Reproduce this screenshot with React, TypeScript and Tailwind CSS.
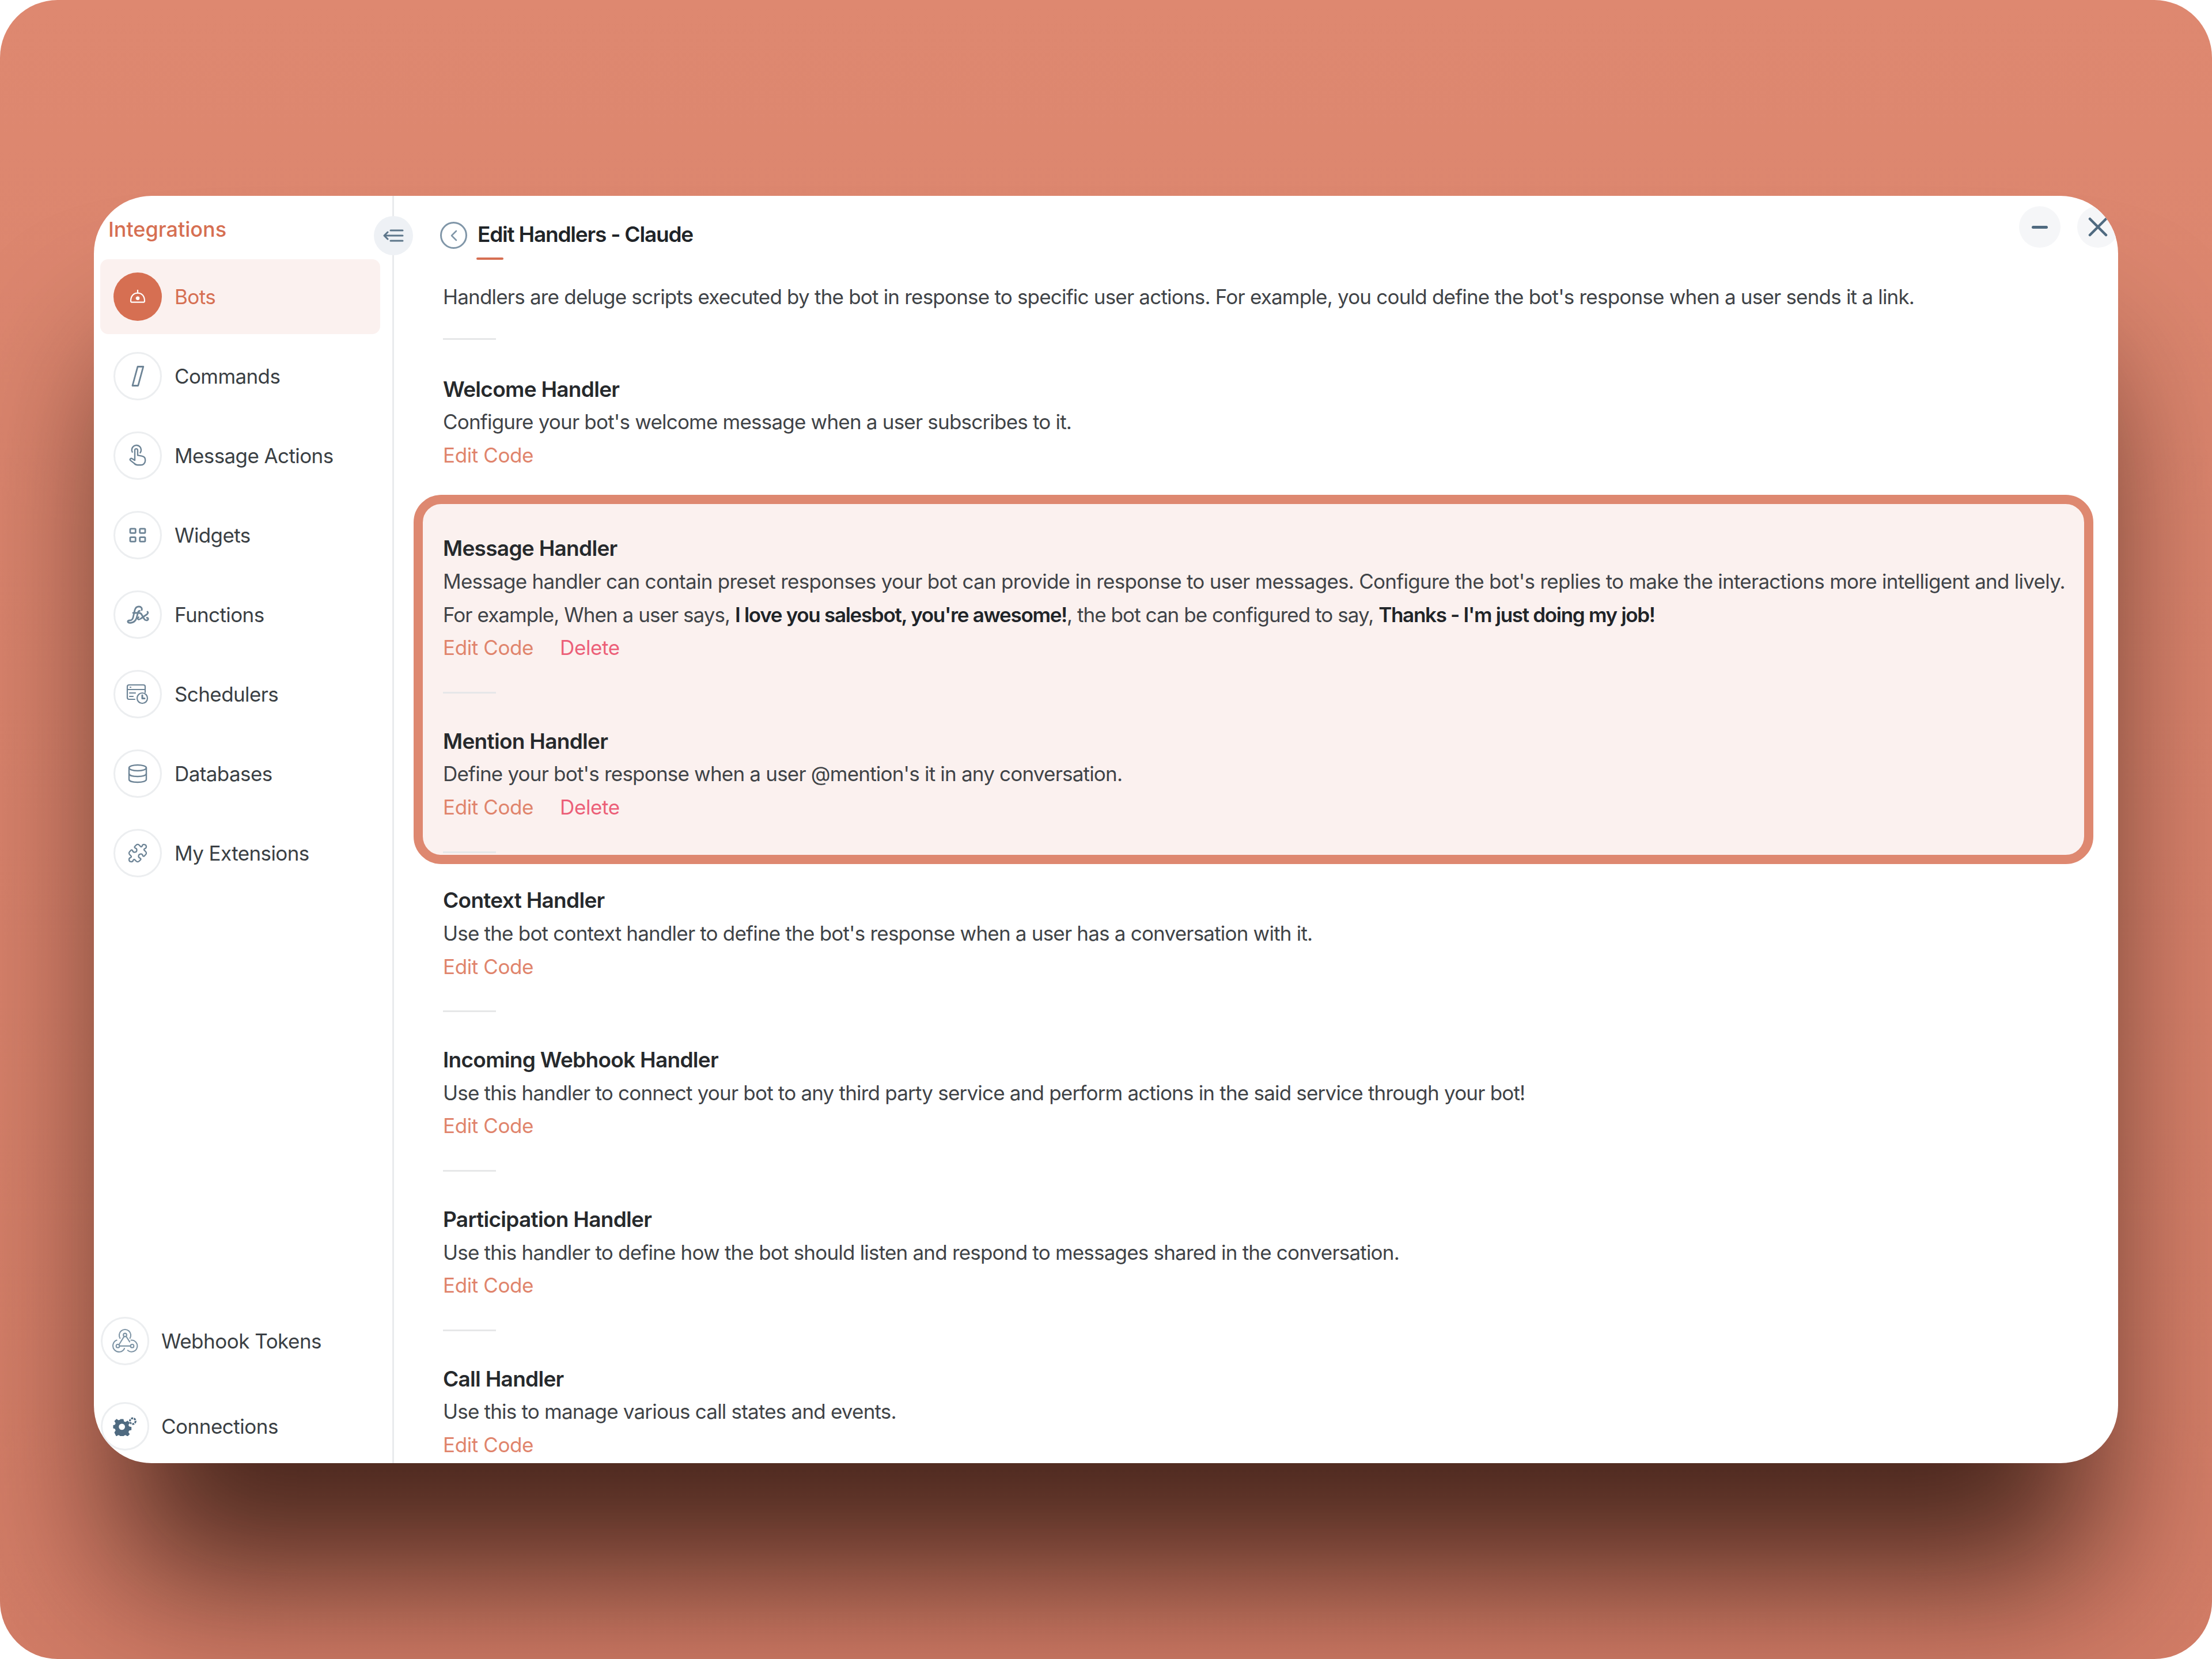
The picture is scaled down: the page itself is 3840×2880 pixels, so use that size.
import React from "react";
import { Puzzle } from "lucide-react";

const P = "#6d8496";
const S = { fill: "none", stroke: P, strokeWidth: 1.9, strokeLinecap: "round", strokeLinejoin: "round" } as const;

const icons: Record<string, React.ReactNode> = {
  bot: (
    <svg width="30" height="24" viewBox="0 0 32 26" fill="none" stroke="#fff" strokeWidth="2.400" strokeLinecap="round" strokeLinejoin="round">
      <path d="M16 1v5" />
      <path d="M3 21c0-9 5-15 13-15s13 6 13 15c0 1.600-1 2.500-3 2.500H6c-2 0-3-.9-3-2.500z" />
      <circle cx="16" cy="16" r="2.400" fill="#fff" />
    </svg>
  ),
  slash: (
    <svg width="36" height="40" viewBox="0 0 24 26" {...S}>
      <path d="M12 2h6.500L12.500 24H6z" />
    </svg>
  ),
  hand: (
    <svg width="30" height="42" viewBox="0 0 24 29" {...S}>
      <path d="M4.500 9.500a6.500 6.500 0 1 1 11 1" />
      <path d="M8 12V7a2 2 0 0 1 4 0v7l5.500 1c3 .5 5 2.500 5 5v1.500a6 6 0 0 1-6 6H12c-2 0-3.500-.8-4.800-2.300L1.800 21c-1.200-1.500.8-3.500 2.500-2.300L8 21z" />
    </svg>
  ),
  widgets: (
    <svg width="32" height="26" viewBox="0 0 32 28" fill="none" stroke={P} strokeWidth="3">
      <rect x="2" y="2" width="10" height="8" rx="1.500" />
      <rect x="20" y="2" width="10" height="8" rx="1.500" />
      <rect x="2" y="18" width="10" height="8" rx="1.500" />
      <rect x="20" y="18" width="10" height="8" rx="1.500" />
    </svg>
  ),
  fx: (
    <svg width="40" height="32" viewBox="0 0 40 32" fill="none" stroke={P} strokeWidth="2.800" strokeLinecap="round" strokeLinejoin="round">
      <path d="M27 8c1-3-1-6-5-6-3.500 0-6 2.500-7 6l-3 13c-.8 3.500-3 5-6 5-2 0-3.500 1-3 2.500.5 1.500 3 2 6 1.500 4.500-.8 7.500-3.500 9-8l2.500-9.500c.5-2 1.500-3 3-3" />
      <path d="M12 13h10c2.500 0 4 1 5 3l4 7c1.500 2.500 4 3.500 6 2.500s1.500-4-1-4" />
      <path d="M37 11c1.500 1.500.5 3.500-1 4.500l-10 7c-2 1.500-3.500 2.500-5 1.500-1.500-1-1-3 .5-3.500" />
    </svg>
  ),
  sched: (
    <svg width="40" height="36" viewBox="0 0 40 36" fill="none" stroke={P} strokeWidth="2.200" strokeLinecap="round" strokeLinejoin="round">
      <path d="M33 15V5c0-2-1.500-3-3-3H5C3 2 2 3.500 2 5v19c0 1.500 1 3 3 3h10" />
      <path d="M2 10h31" />
      <path d="M7 6h1M6 16h10M6 22h6" />
      <circle cx="28" cy="25" r="9" />
      <path d="M28 20v5.500h4" strokeWidth="3" />
    </svg>
  ),
  db: (
    <svg width="36" height="34" viewBox="0 0 36 34" fill="none" stroke={P} strokeWidth="2.400" strokeLinecap="round">
      <ellipse cx="18" cy="7" rx="15" ry="5" />
      <path d="M3 7v20c0 3 6 5 15 5s15-2 15-5V7" />
      <path d="M3 17c0 3 6 5 15 5s15-2 15-5" />
    </svg>
  ),
  ext: <Puzzle size={36} color={P} strokeWidth={1.500} />,
  hook: (
    <svg width="46" height="44" viewBox="0 0 48 44" fill="none" stroke="#7f95a6" strokeWidth="2.200" strokeLinecap="round" strokeLinejoin="round">
      <circle cx="24" cy="11" r="3" />
      <circle cx="11" cy="31" r="3" />
      <circle cx="37" cy="31" r="3" />
      <path d="M22.500 13.500L13.500 28M14 31h20M26 13.500l6.500 10" />
      <path d="M15 17a10.500 10.500 0 1 1 18 0" />
      <path d="M9 20.500a11 11 0 1 0 14 15" />
      <path d="M29 39a10.500 10.500 0 1 0 6-18.500" />
    </svg>
  ),
  gear: (
    <svg width="44" height="34" viewBox="0 0 46 38">
      <path fill="#4f6a80" fillRule="evenodd" d="M14 5h6l1 4.500 3 1.200 4-2.500 4.200 4.200-2.500 4 1.300 3 4.500 1v6l-4.500 1-1.300 3 2.500 4-4.200 4.200-4-2.500-3 1.200-1 2.700h-6l-1-2.700-3-1.200-4 2.500L2.300 31l2.500-4-1.300-3L0 23v-6l3.500-1 1.300-3-2.500-4 4.200-4.200 4 2.500 3-1.200zM17 14a6 6 0 1 0 0 12 6 6 0 0 0 0-12z" />
      <circle cx="38" cy="9" r="5.500" fill="none" stroke="#4f6a80" strokeWidth="3.500" strokeDasharray="4 1.500" />
    </svg>
  ),
};

function NavItem({ icon, label, active }: { icon: string; label: string; active?: boolean }) {
  return (
    <div className={`flex h-[130px] items-center gap-[22px] rounded-[14px] pl-[23px] ${active ? "bg-[#fbf1ef]" : ""}`}>
      <div className={`flex h-[84px] w-[84px] items-center justify-center rounded-full ${active ? "bg-[#d66f52]" : "border-[3px] border-[#eceef0] bg-white"}`}>
        {icons[icon]}
      </div>
      <span className={`text-[35px] leading-none tracking-[-0.6px] ${active ? "text-[#d66f52]" : "text-[#3a3f44]"}`}>{label}</span>
    </div>
  );
}

function FootItem({ icon, label, mb }: { icon: string; label: string; mb: string }) {
  return (
    <div className={`flex items-center gap-[21px] pl-[12px] ${mb}`}>
      <div className="flex h-[84px] w-[84px] items-center justify-center rounded-full border-[3px] border-[#eceef0] bg-white">{icons[icon]}</div>
      <span className="text-[35px] leading-none tracking-[-0.5px] text-[#3a3f44]">{label}</span>
    </div>
  );
}

function Divider() {
  return <div className="h-[3px] w-[92px] bg-[#e6e7e8]" />;
}

function Handler({ title, children, del }: { title: string; children: React.ReactNode; del?: boolean }) {
  return (
    <div className="text-[35px] leading-[57.600px]">
      <div className="text-[37px] font-semibold tracking-[-0.7px] text-[#26292c]">{title}</div>
      <div className="tracking-[-0.8px] text-[#3f4347]">{children}</div>
      <div className="flex gap-[46px] tracking-[-0.4px]">
        <span className="text-[#e0846c]">Edit Code</span>
        {del && <span className="text-[#ec5f78]">Delete</span>}
      </div>
    </div>
  );
}

export default function App() {
  return (
    <div className="h-[2880px] w-[3840px] bg-white font-['Inter',sans-serif]">
      <div className="flex h-[2880px] w-[3840px] flex-col items-start overflow-hidden rounded-[100px] bg-[linear-gradient(180deg,#de8870_0%,#d27c66_100%)] pl-[163px] pt-[340px]">
        <div className="relative flex h-[2200px] w-[3514px] overflow-hidden rounded-[100px] bg-white shadow-[0_240px_320px_-50px_rgba(20,5,0,0.72)]">
          <aside className="flex w-[521px] shrink-0 flex-col border-r-[3px] border-[#e9ebed]">
            <div className="flex h-[110px] items-center pl-[25px] pt-[6px]">
              <span className="text-[36px] font-medium leading-none text-[#d66f52]">Integrations</span>
            </div>
            <nav className="ml-[11px] flex w-[486px] flex-col gap-[8px]">
              <NavItem icon="bot" label="Bots" active />
              <NavItem icon="slash" label="Commands" />
              <NavItem icon="hand" label="Message Actions" />
              <NavItem icon="widgets" label="Widgets" />
              <NavItem icon="fx" label="Functions" />
              <NavItem icon="sched" label="Schedulers" />
              <NavItem icon="db" label="Databases" />
              <NavItem icon="ext" label="My Extensions" />
            </nav>
            <div className="mt-auto flex flex-col">
              <FootItem icon="hook" label="Webhook Tokens" mb="mb-[64px]" />
              <FootItem icon="gear" label="Connections" mb="mb-[22px]" />
            </div>
          </aside>
          <div className="absolute left-[486px] top-[35px] flex h-[68px] w-[68px] items-center justify-center rounded-full bg-[#eef1f5]">
            <svg width="36" height="26" viewBox="0 0 36 26" fill="none" stroke="#5d768a" strokeWidth="3" strokeLinecap="round" strokeLinejoin="round">
              <path d="M13 4h21M2 13h32M13 22h21M8 7l-6 6 6 6" />
            </svg>
          </div>
          <main className="relative min-w-0 flex-1 overflow-hidden pl-[85px]">
            <div className="absolute right-[100px] top-[18px] flex h-[72px] w-[72px] items-center justify-center rounded-full bg-[#f5f6f8]">
              <div className="h-[5px] w-[28px] rounded-full bg-[#4f6a80]" />
            </div>
            <div className="absolute right-[-1px] top-[18px] flex h-[72px] w-[72px] items-center justify-center rounded-full bg-[#f5f6f8]">
              <svg width="34" height="34" viewBox="0 0 34 34" stroke="#4f6a80" strokeWidth="4.500" strokeLinecap="round"><path d="M3 3l28 28M31 3L3 31" /></svg>
            </div>
            <header className="ml-[-5px] flex h-[110px] items-center gap-[18px] pt-[27px]">
              <div className="flex h-[47px] w-[47px] items-center justify-center rounded-full border-[3px] border-[#8096a8]">
                <svg width="14" height="22" viewBox="0 0 14 22" fill="none" stroke="#8096a8" strokeWidth="2.500" strokeLinecap="round" strokeLinejoin="round"><path d="M11 3l-8 8 8 8" /></svg>
              </div>
              <div className="relative -translate-y-[2px]">
                <span className="text-[37px] font-semibold leading-none tracking-[-1.2px] text-[#202428]">Edit Handlers - Claude</span>
                <div className="absolute bottom-[-25px] left-[-2px] h-[4px] w-[47px] rounded-full bg-[#d66f52]" />
              </div>
            </header>
            <p className="mt-[37px] text-[35px] leading-[57.600px] tracking-[-0.8px] text-[#3f4347]">
              Handlers are deluge scripts executed by the bot in response to specific user actions. For example, you could define the bot's response when a user sends it a link.
            </p>
            <div className="mt-[42px]"><Divider /></div>
            <div className="mt-[57px]">
              <Handler title="Welcome Handler">Configure your bot's welcome message when a user subscribes to it.</Handler>
            </div>
            <div className="ml-[-51px] mt-[40px] h-[641px] w-[2916px] rounded-[48px] border-[16px] border-[#de8870] bg-[#fbf1ef] pl-[35px] pt-[48px]">
              <Handler title="Message Handler" del>
                <div className="tracking-[-0.73px]">Message handler can contain preset responses your bot can provide in response to user messages. Configure the bot's replies to make the interactions more intelligent and lively.</div>
                <div className="tracking-[-0.95px]">For example, When a user says, <b className="font-semibold tracking-[-1.3px] text-[#202428]">I love you salesbot, you're awesome!</b>, the bot can be configured to say, <b className="font-semibold tracking-[-1.3px] text-[#202428]">Thanks - I'm just doing my job!</b></div>
              </Handler>
              <div className="mb-[54px] mt-[47px]"><Divider /></div>
              <Handler title="Mention Handler" del>Define your bot's response when a user @mention's it in any conversation.</Handler>
              <div className="mt-[47px]"><Divider /></div>
            </div>
            <div className="mt-[34px] flex flex-col">
              <Handler title="Context Handler">Use the bot context handler to define the bot's response when a user has a conversation with it.</Handler>
              <div className="mb-[54px] mt-[47px]"><Divider /></div>
              <Handler title="Incoming Webhook Handler">Use this handler to connect your bot to any third party service and perform actions in the said service through your bot!</Handler>
              <div className="mb-[54px] mt-[47px]"><Divider /></div>
              <Handler title="Participation Handler">Use this handler to define how the bot should listen and respond to messages shared in the conversation.</Handler>
              <div className="mb-[54px] mt-[47px]"><Divider /></div>
              <Handler title="Call Handler">Use this to manage various call states and events.</Handler>
            </div>
          </main>
        </div>
      </div>
    </div>
  );
}
